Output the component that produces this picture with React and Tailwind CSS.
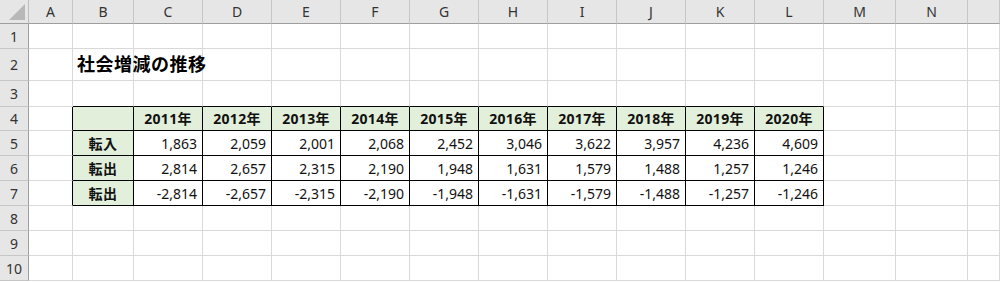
const columns = ["A", "B", "C", "D", "E", "F", "G", "H", "I", "J", "K", "L", "M", "N", ""];
const years = ["2011年", "2012年", "2013年", "2014年", "2015年", "2016年", "2017年", "2018年", "2019年", "2020年"];

const rows = [
  { label: "転入", values: ["1,863", "2,059", "2,001", "2,068", "2,452", "3,046", "3,622", "3,957", "4,236", "4,609"] },
  { label: "転出", values: ["2,814", "2,657", "2,315", "2,190", "1,948", "1,631", "1,579", "1,488", "1,257", "1,246"] },
  { label: "転出", values: ["-2,814", "-2,657", "-2,315", "-2,190", "-1,948", "-1,631", "-1,579", "-1,488", "-1,257", "-1,246"] },
];

// col index: 0 = A ... 14 = beyond N
function Cell({ r, c }) {
  const inTable = r >= 4 && r <= 7 && c >= 1 && c <= 11;
  const leftOfTable = r >= 4 && r <= 7 && c === 0;
  const aboveTable = r === 3 && c >= 1 && c <= 11;

  let border = "border-r border-b border-[#d9d9d9]";
  if (inTable) border = "border-r border-b border-black";
  else if (leftOfTable) border = "border-r border-b border-r-black border-b-[#d9d9d9]";
  else if (aboveTable) border = "border-r border-b border-r-[#d9d9d9] border-b-black";

  let bg = "bg-white";
  if (inTable && (r === 4 || c === 1)) bg = "bg-[#e2efda]";

  let content = null;
  let align = "justify-end pr-[5px]";
  if (r === 2 && c === 1) {
    content = (
      <span className="relative z-10 whitespace-nowrap pl-[4px] text-[18px] font-bold tracking-[0.5px] text-black">
        社会増減の推移
      </span>
    );
    align = "justify-start overflow-visible";
  } else if (inTable && r === 4 && c >= 2) {
    content = <span className="font-bold tracking-[0.3px]">{years[c - 2]}</span>;
    align = "justify-center";
  } else if (inTable && c === 1 && r >= 5) {
    content = <span className="font-bold tracking-[0.5px]">{rows[r - 5].label}</span>;
    align = "justify-center";
  } else if (inTable && r >= 5 && c >= 2) {
    content = <span>{rows[r - 5].values[c - 2]}</span>;
  }

  return (
    <div className={`flex items-center ${align} ${border} ${bg} text-[14px] text-[#111]`}>
      {content}
    </div>
  );
}

export default function App() {
  return (
    <div
      className="h-[282px] w-[1000px] overflow-hidden bg-white"
      style={{ fontFamily: '"Noto Sans", "Noto Sans CJK JP", sans-serif' }}
    >
      <div className="grid grid-cols-[29px_44px_61px_69px_69px_69px_69px_69px_69px_69px_69px_69px_69px_72px_72px_1fr] grid-rows-[24px_25px_32px_26px_24px_25px_25px_25px_25px_25px_25px]">
        {/* Corner */}
        <div className="relative border-r border-b border-r-[#bdbdbd] border-b-[#9e9e9e] bg-[#e6e6e6]">
          <svg className="absolute right-[3px] bottom-[3px]" width="16" height="16" viewBox="0 0 16 16">
            <polygon points="16,0 16,16 0,16" fill="#b8b8b8" />
          </svg>
        </div>

        {/* Column headers */}
        {columns.map((col, i) => (
          <div
            key={`h-${i}`}
            className="flex items-center justify-center border-r border-b border-r-[#c6c6c6] border-b-[#9e9e9e] bg-[#e6e6e6] text-[14px] text-[#333]"
          >
            {col}
          </div>
        ))}

        {/* Rows */}
        {Array.from({ length: 10 }, (_, idx) => {
          const r = idx + 1;
          return [
            <div
              key={`rh-${r}`}
              className="flex items-center justify-center border-r border-b border-r-[#9e9e9e] border-b-[#c6c6c6] bg-[#e6e6e6] text-[14px] text-[#333]"
            >
              {r}
            </div>,
            ...columns.map((_, c) => <Cell key={`c-${r}-${c}`} r={r} c={c} />),
          ];
        })}
      </div>
    </div>
  );
}
